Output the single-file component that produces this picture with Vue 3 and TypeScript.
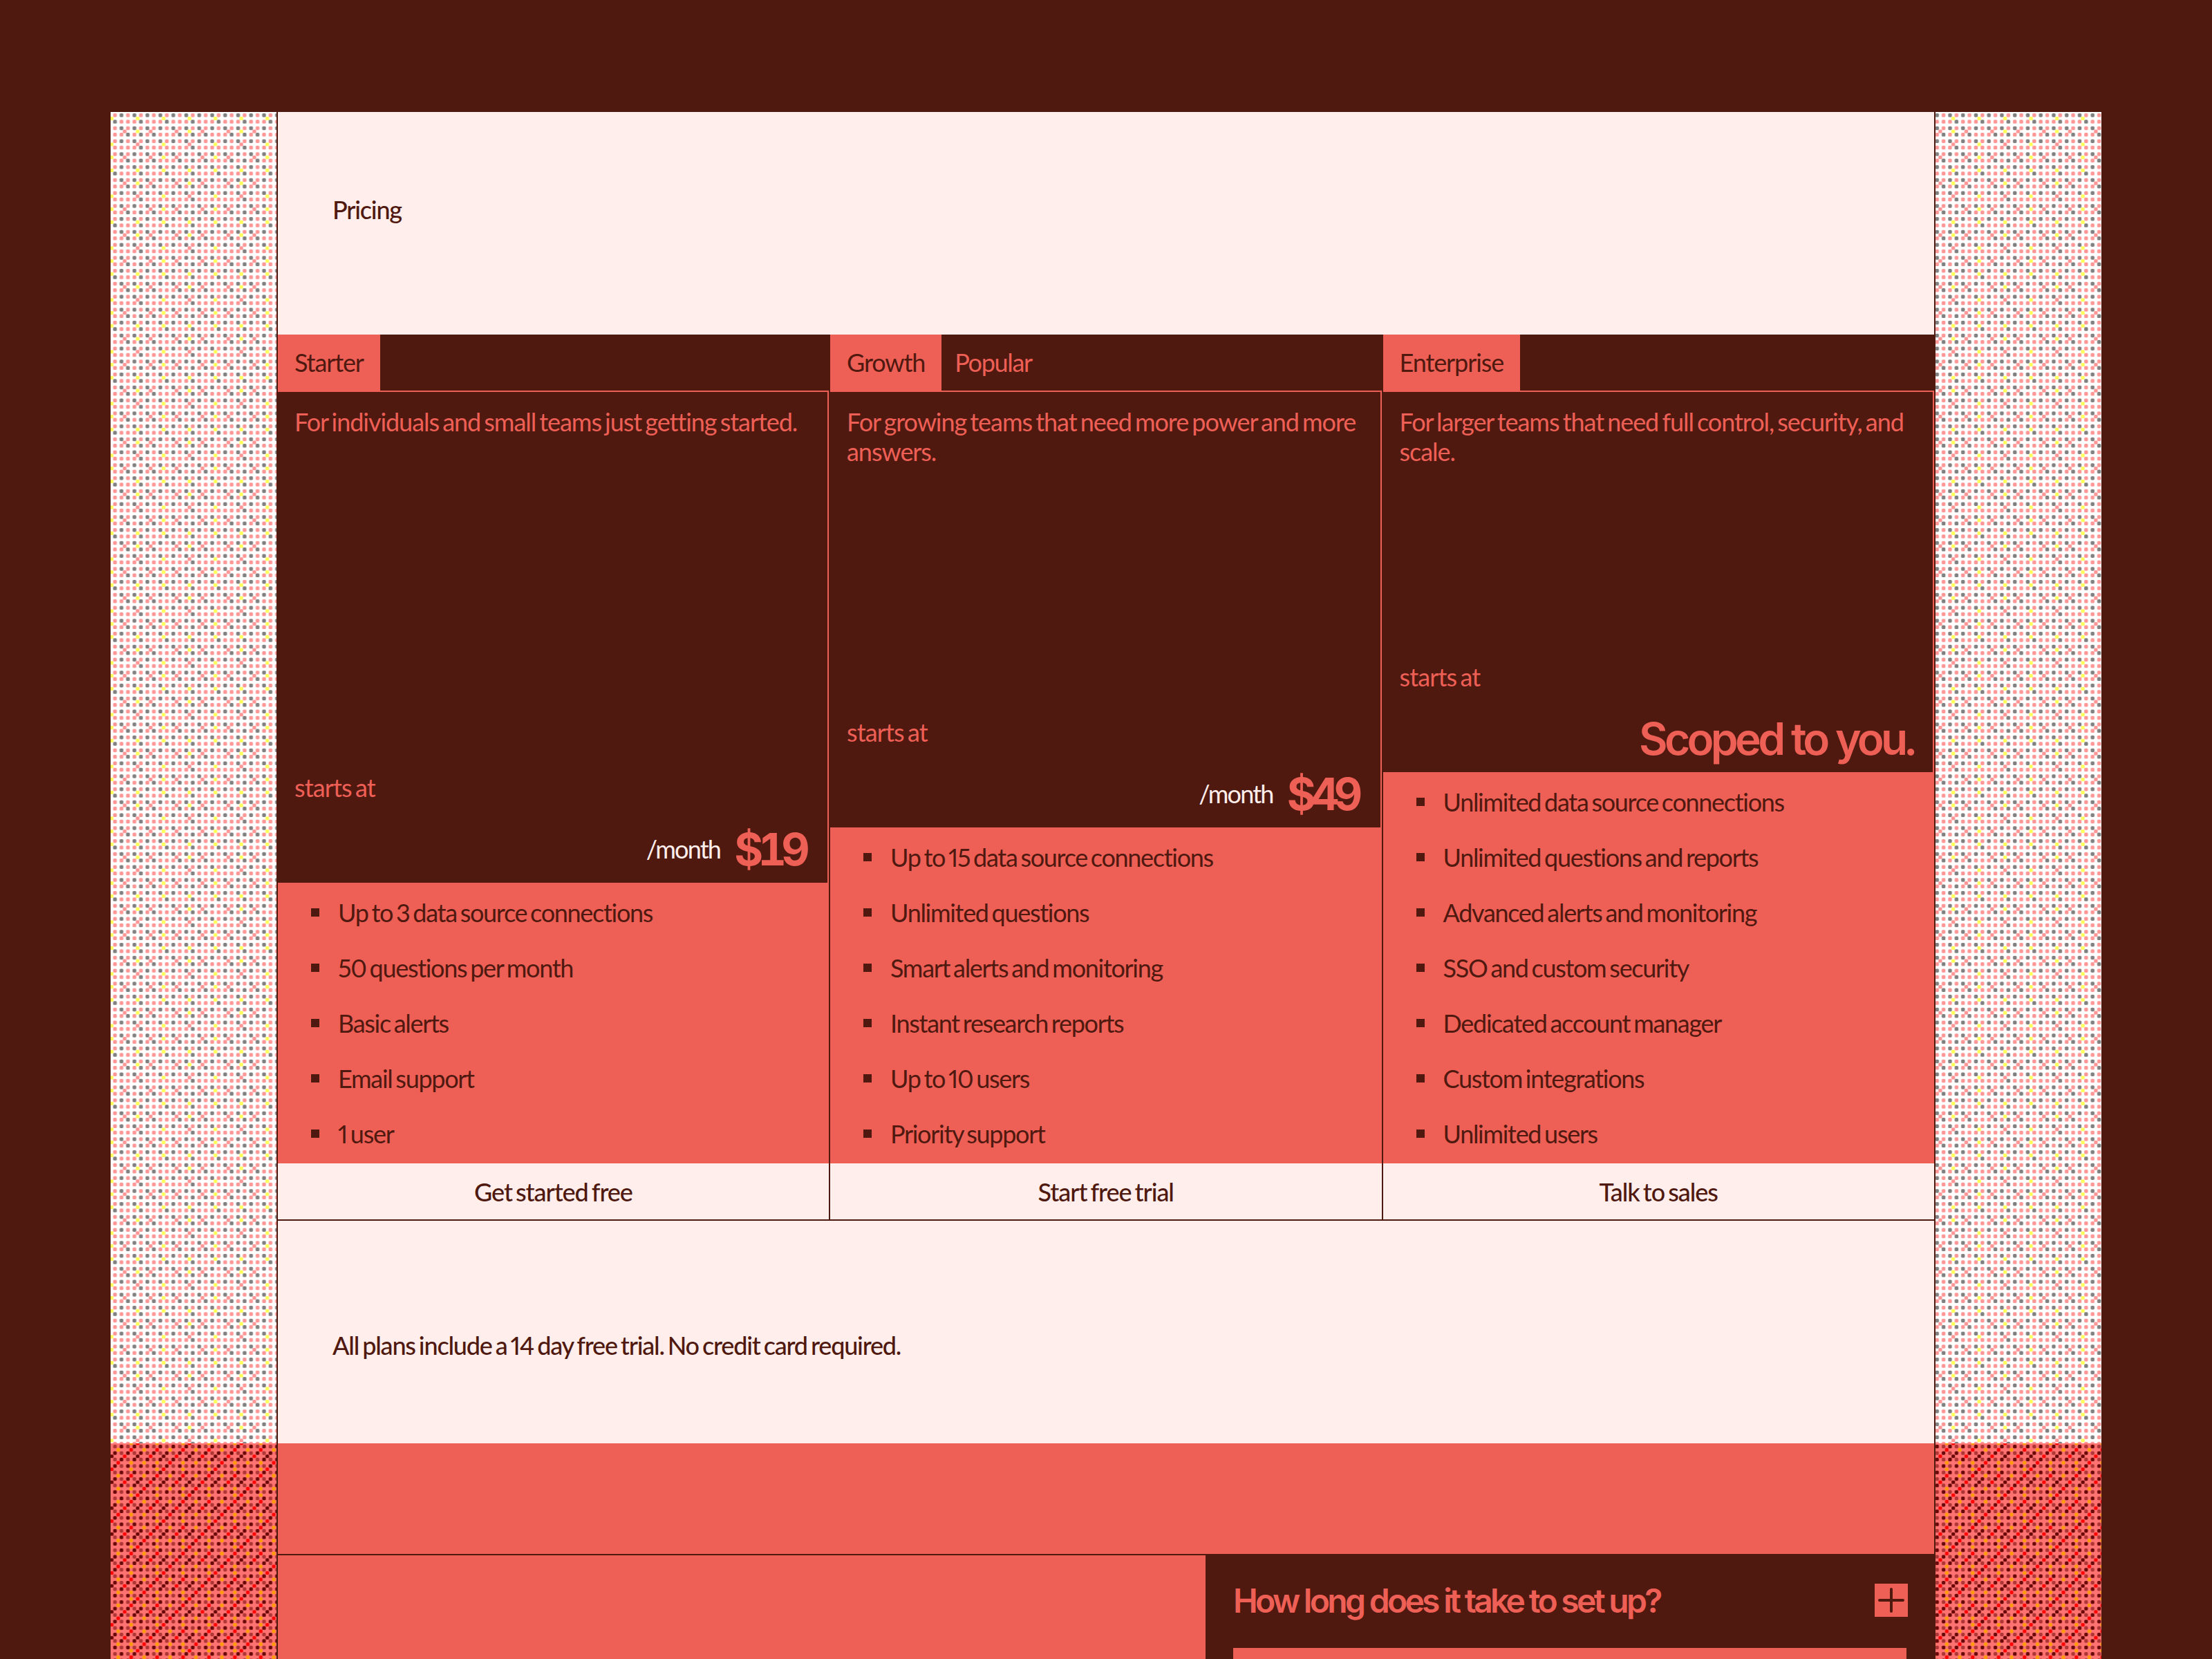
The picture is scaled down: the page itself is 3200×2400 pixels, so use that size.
<script setup lang="ts">
type Dot = { x: number; y: number; c: string }
type Plan = {
  name: string
  badge?: string
  blurb: string
  price?: string
  quote?: string
  features: string[]
  cta: string
}

const plans: Plan[] = [
  {
    name: 'Starter',
    blurb: 'For individuals and small teams just getting started.',
    price: '$19',
    features: ['Up to 3 data source connections', '50 questions per month', 'Basic alerts', 'Email support', '1 user'],
    cta: 'Get started free'
  },
  {
    name: 'Growth',
    badge: 'Popular',
    blurb: 'For growing teams that need more power and more answers.',
    price: '$49',
    features: ['Up to 15 data source connections', 'Unlimited questions', 'Smart alerts and monitoring', 'Instant research reports', 'Up to 10 users', 'Priority support'],
    cta: 'Start free trial'
  },
  {
    name: 'Enterprise',
    blurb: 'For larger teams that need full control, security, and scale.',
    quote: 'Scoped to you.',
    features: ['Unlimited data source connections', 'Unlimited questions and reports', 'Advanced alerts and monitoring', 'SSO and custom security', 'Dedicated account manager', 'Custom integrations', 'Unlimited users'],
    cta: 'Talk to sales'
  }
]

// the side texture is an 8x8 grid of dots, with a second grid sat between them
const STEP = 9.375
const TILE = STEP * 8

const spot = (h: number, v: number, c: string): Dot[] => {
  const x = h * STEP
  const y = v * STEP
  const out = [{ x, y, c }]
  if (x === 0) out.push({ x: TILE, y, c })
  if (y === 0) out.push({ x, y: TILE, c })
  return out
}

const grid = (colour: (i: number, j: number) => string | null): Dot[] => {
  const dots: Dot[] = []
  for (let j = 0; j < 8; j++) {
    for (let i = 0; i < 8; i++) {
      const c = colour(i, j)
      if (c) dots.push({ x: (i + 0.5) * STEP, y: (j + 0.5) * STEP, c })
    }
  }
  return dots
}

const greyRows: Record<number, number[]> = {
  0: [1, 3, 5, 7], 1: [0, 4], 2: [1, 3, 5, 7], 3: [2, 4, 6],
  4: [1, 3, 5, 7], 5: [4], 6: [1, 3, 5, 7], 7: [2, 4, 6]
}

const PINK = '#ff9797'
const GREY = '#808080'
const YELLOW = '#ffff5c'
const DARK = '#6a0808'
const MID = '#b03535'
const RED = '#ff0505'
const ORANGE = '#ff9a0a'

const lightDots: Dot[] = [
  ...grid((i, j) => (greyRows[j].includes(i) ? GREY : PINK)),
  ...[[4, 1], [0, 1], [4, 3], [0, 5], [0, 7]].flatMap(([h, v]) => spot(h, v, YELLOW)),
  ...[[2, 3], [6, 3], [4, 5], [2, 7], [6, 7]].flatMap(([h, v]) => spot(h, v, PINK))
]

const redDots: Dot[] = [
  ...grid((i, j) => ((i + j) % 2 === 1 ? DARK : MID)),
  ...[[0, 2], [4, 2], [0, 6], [4, 6]].flatMap(([h, v]) => spot(h, v, DARK)),
  ...[[3, 1], [7, 1], [2, 2], [6, 2], [1, 3], [0, 4], [3, 5], [7, 5], [2, 6], [6, 6], [5, 7], [4, 0]]
    .flatMap(([h, v]) => spot(h, v, RED)),
  ...[[1, 1], [5, 1], [3, 3], [5, 3], [7, 3], [3, 4], [7, 4], [1, 5], [5, 5], [1, 7], [3, 7], [7, 7], [3, 0], [7, 0]]
    .flatMap(([h, v]) => spot(h, v, ORANGE))
]

const sides = [
  { id: 'l', offset: 1.64 },
  { id: 'r', offset: -11.8 }
]
</script>

<template>
  <div class="page">
    <div class="frame">
      <div v-for="(side, n) in sides" :key="side.id" class="side" :class="n === 0 ? 'side-left' : 'side-right'">
        <svg class="tex tex-light" aria-hidden="true">
          <defs>
            <pattern :id="`light-${side.id}`" :x="side.offset" y="0" :width="TILE" :height="TILE" patternUnits="userSpaceOnUse">
              <rect :width="TILE" :height="TILE" fill="#ffffff" />
              <rect v-for="(d, k) in lightDots" :key="k" :x="d.x - 2.7" :y="d.y - 2.7" width="5.4" height="5.4" rx="1.6" :fill="d.c" />
            </pattern>
          </defs>
          <rect width="100%" height="100%" :fill="`url(#light-${side.id})`" />
        </svg>
        <svg class="tex tex-red" aria-hidden="true">
          <defs>
            <pattern :id="`red-${side.id}`" :x="side.offset" y="0" :width="TILE" :height="TILE" patternUnits="userSpaceOnUse">
              <rect :width="TILE" :height="TILE" fill="#ff7272" />
              <rect v-for="(d, k) in redDots" :key="k" :x="d.x - 2.6" :y="d.y - 2.6" width="5.2" height="5.2" rx="1.6" :fill="d.c" />
            </pattern>
          </defs>
          <rect width="100%" height="100%" :fill="`url(#red-${side.id})`" />
        </svg>
      </div>

      <main class="main">
        <section class="intro">
          <p class="lead">Pricing</p>
        </section>

        <section class="plans">
          <article v-for="plan in plans" :key="plan.name" class="plan">
            <header class="plan-head">
              <span class="plan-name">{{ plan.name }}</span>
              <span v-if="plan.badge" class="plan-badge">{{ plan.badge }}</span>
            </header>
            <div class="plan-body">
              <p class="plan-blurb">{{ plan.blurb }}</p>
              <p class="starts">starts at</p>
              <div class="price-row">
                <template v-if="plan.price">
                  <span class="per">/month</span>
                  <span class="price">{{ plan.price }}</span>
                </template>
                <span v-else class="price quote">{{ plan.quote }}</span>
              </div>
            </div>
            <ul class="features">
              <li v-for="f in plan.features" :key="f">{{ f }}</li>
            </ul>
            <a class="cta">{{ plan.cta }}</a>
          </article>
        </section>

        <section class="note">
          <p class="lead">All plans include a 14 day free trial. No credit card required.</p>
        </section>

        <section class="band"></section>

        <section class="faq">
          <div class="faq-left"></div>
          <div class="faq-right">
            <div class="faq-row">
              <h3 class="faq-q">How long does it take to set up?</h3>
              <span class="faq-toggle">
                <svg viewBox="0 0 48 48" width="48" height="48" fill="none" stroke="currentColor" stroke-width="4" stroke-linecap="round">
                  <path d="M7 24h34M24 8v32" />
                </svg>
              </span>
            </div>
            <div class="faq-next"></div>
          </div>
        </section>
      </main>
    </div>
  </div>
</template>

<style>
html,
body {
  margin: 0;
  background: #501910;
}
</style>

<style scoped>
.page {
  height: 2400px;
  overflow: hidden;
  background: #501910;
  padding: 162px 160px 0;
  box-sizing: border-box;
  font-family: Lato, "Noto Sans", sans-serif;
  font-variant-numeric: proportional-nums;
  color: #501910;
}

.frame {
  display: grid;
  grid-template-columns: 240px 1fr 240px;
}

.side {
  display: flex;
  flex-direction: column;
  height: 2238px;
}

.side-left {
  grid-column: 1;
  grid-row: 1;
}

.side-right {
  grid-column: 3;
  grid-row: 1;
}

.tex {
  display: block;
  width: 100%;
}

.tex-light {
  height: 1926px;
}

.tex-red {
  flex: 1;
}

.main {
  grid-column: 2;
  grid-row: 1;
  border-left: 2px solid #501910;
  border-right: 2px solid #501910;
  background: #ffeeeb;
}

.intro {
  height: 322px;
  padding: 120px 79px 0;
  box-sizing: border-box;
}

.note {
  height: 322px;
  padding: 159px 79px 0;
  box-sizing: border-box;
}

.lead {
  margin: 0;
  font-size: 36px;
  line-height: 42px;
  letter-spacing: -1.2px;
  word-spacing: -2.8px;
  font-weight: 500;
}

.plans {
  display: grid;
  grid-template-columns: 799px 799.5px 1fr;
  border-bottom: 2px solid #501910;
}

.plan {
  display: flex;
  flex-direction: column;
  min-width: 0;
  border-right: 2px solid #501910;
}

.plan:last-child {
  border-right: 0;
}

.plan-head {
  display: flex;
  align-items: stretch;
  height: 81px;
  background: #501910;
}

.plan-name {
  display: flex;
  align-items: center;
  height: 83px;
  padding: 0 24px 3px;
  box-sizing: border-box;
  background: #ee5f56;
  font-size: 36px;
  letter-spacing: -1.1px;
  position: relative;
  z-index: 1;
}

.plan-badge {
  display: flex;
  align-items: center;
  padding: 0 19px 2px;
  color: #ee5f56;
  font-size: 36px;
  letter-spacing: -1.3px;
}

.plan-body {
  flex: 1;
  display: flex;
  flex-direction: column;
  background: #501910;
  border-top: 2px solid #ee5f56;
  border-right: 2px solid #ee5f56;
  padding: 22px 26px 10px 24px;
}

.plan-blurb {
  flex: 1;
  margin: 0;
  min-height: 369px;
  color: #ee5f56;
  font-size: 36px;
  line-height: 42.6px;
  letter-spacing: -1.05px;
  word-spacing: -3px;
}

.starts {
  margin: 0;
  color: #ee5f56;
  font-size: 36px;
  line-height: 42px;
  letter-spacing: -0.9px;
  word-spacing: -3px;
}

.price-row {
  display: flex;
  justify-content: flex-end;
  align-items: center;
  gap: 20px;
  margin-top: 31px;
}

.per {
  color: #ffeeeb;
  font-size: 36px;
  letter-spacing: -1.8px;
  margin-bottom: 2px;
}

.price {
  color: #ee5f56;
  font-family: Inter, "Liberation Sans", sans-serif;
  font-size: 64px;
  line-height: 76px;
  font-weight: 700;
  letter-spacing: -7.6px;
  font-variant-numeric: tabular-nums;
  margin-right: 7px;
}

.quote {
  font-weight: 600;
  letter-spacing: -4.7px;
  margin-right: 2px;
}

.features {
  margin: 0;
  padding: 3px 0;
  list-style: none;
  background: #ee5f56;
}

.features li {
  display: flex;
  align-items: center;
  gap: 27px;
  height: 80px;
  padding-left: 48px;
  font-size: 36px;
  letter-spacing: -1.3px;
  word-spacing: -3px;
}

.features li::before {
  content: "";
  width: 12px;
  height: 12px;
  background: #501910;
  flex: none;
}

.cta {
  display: flex;
  align-items: center;
  justify-content: center;
  height: 81px;
  font-size: 36px;
  letter-spacing: -1.05px;
  word-spacing: -3px;
  font-weight: 500;
}

.band {
  height: 160px;
  background: #ee5f56;
  border-bottom: 2px solid #501910;
  margin-bottom: -2px;
}

.faq {
  display: grid;
  grid-template-columns: 1342px 1fr;
  height: 240px;
}

.faq-left {
  background: #ee5f56;
  margin-top: 2px;
}

.faq-right {
  background: #501910;
  padding: 43px 38px 0 40px;
  position: relative;
}

.faq-row {
  display: flex;
  align-items: center;
  justify-content: space-between;
  height: 48px;
}

.faq-q {
  margin: 0;
  color: #ee5f56;
  font-family: Inter, "Liberation Sans", sans-serif;
  font-size: 48px;
  font-weight: 600;
  letter-spacing: -3.7px;
}

.faq-toggle {
  display: block;
  width: 48px;
  height: 48px;
  background: #ee5f56;
  color: #501910;
}

.faq-toggle svg {
  display: block;
}

.faq-next {
  height: 120px;
  margin-top: 45px;
  margin-right: 2px;
  background: #ee5f56;
}
</style>
